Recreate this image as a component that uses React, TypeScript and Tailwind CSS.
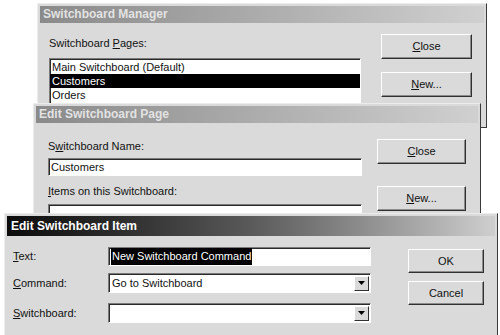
import type { ReactNode } from 'react'

const face = "font-['Liberation_Sans',Arial,sans-serif]"

function Btn({ children, className = '' }: { children: ReactNode; className?: string }) {
  return (
    <div
      className={`flex items-center justify-center border border-t-white border-l-white border-r-[#303030] border-b-[#303030] bg-[#dadada] text-[11px] text-[#111] shadow-[inset_-1px_-1px_0_#8c8c8c] ${className}`}
    >
      {children}
    </div>
  )
}

function Field({ children, className = '' }: { children: ReactNode; className?: string }) {
  return (
    <div
      className={`border border-t-[#7a7a7a] border-l-[#7a7a7a] border-r-white border-b-white bg-white shadow-[inset_1px_1px_0_#2a2a2a] ${className}`}
    >
      {children}
    </div>
  )
}

function Combo({ children }: { children?: ReactNode }) {
  return (
    <Field className="flex h-[20px] w-[263px] items-center pl-[3px] text-[11px]">
      <span className="flex-1 truncate">{children}</span>
      <div className="mr-[1px] flex h-[15px] w-[15px] items-center justify-center border border-t-white border-l-white border-r-[#303030] border-b-[#303030] bg-[#dadada]">
        <svg width="7" height="4" viewBox="0 0 7 4">
          <path d="M0 0h7L3.5 4z" fill="#000" />
        </svg>
      </div>
    </Field>
  )
}

function Title({ children, active = false }: { children: ReactNode; active?: boolean }) {
  return active ? (
    <div className="h-[20px] bg-gradient-to-r from-[#0c0c0c] via-[#5a5a5a] to-[#cfcfcf] pl-[4px] text-[12px] font-bold leading-[20px] text-white">
      {children}
    </div>
  ) : (
    <div className="h-[17px] bg-gradient-to-r from-[#8a8a8a] to-[#d0d0d0] pl-[3px] text-[12px] font-bold leading-[17px] text-[#e2e2e2]">
      {children}
    </div>
  )
}

const win =
  'absolute border border-t-[#ececec] border-l-[#ececec] border-r-[#3a3a3a] border-b-[#3a3a3a] bg-[#dadada] p-[2px] text-[#111]'

export default function App() {
  return (
    <div className={`relative h-[335px] w-[500px] overflow-hidden bg-white ${face}`}>
      {/* Switchboard Manager */}
      <div className={`${win} left-[37px] top-[3px] h-[125px] w-[450px]`}>
        <Title>Switchboard Manager</Title>
        <div className="flex pl-[9px]">
          <div className="w-[312px] pt-[13px]">
            <p className="text-[11px] leading-[15px]">
              Switchboard <u>P</u>ages:
            </p>
            <Field className="mt-[7px] h-[60px] pt-[1px] text-[11px] leading-[14px]">
              <p className="pl-[2px]">Main Switchboard (Default)</p>
              <p className="bg-black pl-[2px] text-white">Customers</p>
              <p className="pl-[2px]">Orders</p>
            </Field>
          </div>
          <div className="ml-[20px] flex flex-col gap-[13px] pt-[11px]">
            <Btn className="h-[25px] w-[91px]">
              <u>C</u>lose
            </Btn>
            <Btn className="h-[25px] w-[91px]">
              <u>N</u>ew...
            </Btn>
          </div>
        </div>
      </div>

      {/* Edit Switchboard Page */}
      <div className={`${win} left-[33px] top-[103px] h-[125px] w-[448px]`}>
        <Title>Edit Switchboard Page</Title>
        <div className="flex pl-[12px]">
          <div className="w-[314px] pt-[16px]">
            <p className="text-[11px] leading-[15px]">
              S<u>w</u>itchboard Name:
            </p>
            <Field className="mt-[4px] flex h-[18px] items-center pl-[2px] text-[11px]">Customers</Field>
            <p className="mt-[8px] text-[11px] leading-[15px]">
              <u>I</u>tems on this Switchboard:
            </p>
            <Field className="mt-[5px] h-[40px]" />
          </div>
          <div className="ml-[15px] flex flex-col gap-[22px] pt-[16px]">
            <Btn className="h-[25px] w-[89px]">
              <u>C</u>lose
            </Btn>
            <Btn className="h-[25px] w-[89px]">
              <u>N</u>ew...
            </Btn>
          </div>
        </div>
      </div>

      {/* Edit Switchboard Item */}
      <div className={`${win} left-[4px] top-[213px] h-[130px] w-[494px]`}>
        <Title active>Edit Switchboard Item</Title>
        <div className="flex pl-[6px]">
          <div className="flex flex-col pt-[11px] text-[11px]">
            <div className="flex items-center">
              <span className="w-[95px]">
                <u>T</u>ext:
              </span>
              <Field className="flex h-[19px] w-[263px] items-center pl-[2px]">
                <span className="bg-black px-[1px] text-white">New Switchboard Command</span>
              </Field>
            </div>
            <div className="mt-[7px] flex items-center">
              <span className="w-[95px]">
                <u>C</u>ommand:
              </span>
              <Combo>Go to Switchboard</Combo>
            </div>
            <div className="mt-[10px] flex items-center">
              <span className="w-[95px]">
                <u>S</u>witchboard:
              </span>
              <Combo />
            </div>
          </div>
          <div className="ml-[37px] flex flex-col gap-[8px] pt-[13px]">
            <Btn className="h-[24px] w-[76px]">OK</Btn>
            <Btn className="h-[24px] w-[76px]">Cancel</Btn>
          </div>
        </div>
      </div>
    </div>
  )
}
